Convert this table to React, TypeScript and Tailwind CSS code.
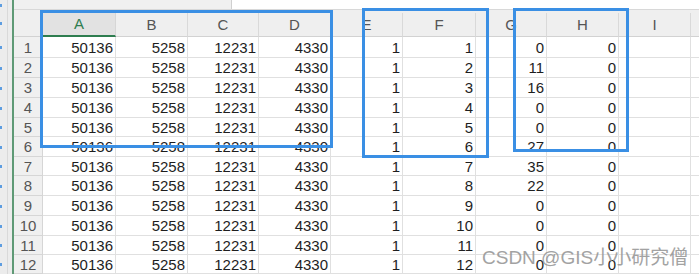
import React from "react";

const COLS = ["A", "B", "C", "D", "E", "F", "G", "H", "I"];
const WIDTHS = ["w-[73px]", "w-[72px]", "w-[71px]", "w-[72px]", "w-[72px]", "w-[73px]", "w-[71px]", "w-[72px]", "w-[72px]"];
const G = [0, 11, 16, 0, 0, 27, 35, 22, 0, 0, 0, 0];
const ROW_H = [
  "h-[21px]",
  "h-[20px]",
  "h-[20px]",
  "h-[20px]",
  "h-[19px]",
  "h-[20px]",
  "h-[19px]",
  "h-[20px]",
  "h-[20px]",
  "h-[20px]",
  "h-[19px]",
  "h-[19px]",
];

function Strip() {
  return (
    <>
      <div className="w-[12px] shrink-0 h-full bg-[#ececec] flex items-center">
        <div className="w-[2px] h-[3px] bg-[#5d9de0]" />
        <div className="ml-[5px] w-px h-full bg-[#d9d9d9]" />
      </div>
      <div className="w-[2px] shrink-0 h-full bg-[#5f9a76]" />
    </>
  );
}

export default function App() {
  return (
    <div className="relative w-[699px] h-[275px] overflow-hidden bg-white flex flex-col font-['Liberation_Sans','Noto_Sans_CJK_SC',sans-serif]">
      {/* top bar */}
      <div className="flex h-[10px] shrink-0">
        <Strip />
        <div className="flex flex-1 border-b border-[#d8d8d8]">
          <div className="w-[218px] bg-[#f0f0f0] border-r border-[#d0d0d0]" />
          <div className="flex-1 bg-white" />
        </div>
      </div>

      {/* column header */}
      <div className="flex h-[27px] shrink-0">
        <Strip />
        <div className="flex flex-1 bg-[#efefef]">
          <div className="w-[29px] shrink-0 border-r border-b border-[#d2d2d2]" />
          {COLS.map((c, i) =>
            i === 0 ? (
              <div key={c} className={`${WIDTHS[i]} shrink-0 flex flex-col`}>
                <div className="h-[7px]" />
                <div className="flex-1 bg-[#e2e2e2] border-r border-[#d6d6d6] border-b-2 border-b-[#2e7d4f] flex items-center justify-center text-[15px] text-[#2e7d4f] pt-[1px]">
                  {c}
                </div>
              </div>
            ) : (
              <div key={c} className={`${WIDTHS[i]} shrink-0 flex flex-col`}>
                <div className="h-[8px] border-b border-transparent" />
                <div className="flex-1 border-r border-[#d9d9d9] border-b border-b-[#d2d2d2] flex items-center justify-center text-[15px] text-[#555] pt-[1px]">
                  {c}
                </div>
              </div>
            )
          )}
          <div className="flex-1 flex flex-col">
            <div className="h-[8px]" />
            <div className="flex-1 border-b border-[#d2d2d2]" />
          </div>
        </div>
      </div>

      {/* data rows */}
      {ROW_H.map((h, r) => {
        const vals: (string | number)[] = [50136, 5258, 12231, 4330, 1, r + 1, G[r], 0, ""];
        return (
          <div key={r} className={`flex ${h} shrink-0`}>
            <Strip />
            <div className="flex flex-1 min-w-0">
              <div className="w-[29px] shrink-0 bg-[#f0f0f0] border-r border-b border-[#d6d6d6] flex items-center justify-center pt-[2px] text-[15px] text-[#555]">
                {r + 1}
              </div>
              {vals.map((v, i) => (
                <div
                  key={i}
                  className={`${WIDTHS[i]} shrink-0 border-r border-b border-[#e0e0e0] flex items-center justify-end pr-[2px] pt-[2px] text-[15px] text-[#1e1e1e]`}
                >
                  {v}
                </div>
              ))}
              <div className="flex-1 border-b border-[#e0e0e0]" />
            </div>
          </div>
        );
      })}

      {/* annotation boxes */}
      <div className="absolute left-[40px] top-[10px] w-[293px] h-[138px] border-[3px] border-[#3a8fe4] pointer-events-none" />
      <div className="absolute left-[362px] top-[8px] w-[127px] h-[150px] border-[3px] border-[#3a8fe4] pointer-events-none" />
      <div className="absolute left-[513px] top-[8px] w-[116px] h-[144px] border-[3px] border-[#3a8fe4] pointer-events-none" />

      {/* watermark */}
      <div className="absolute left-[482px] top-[248px] text-[19px] leading-[19px] whitespace-nowrap text-[#999999] opacity-90 pointer-events-none">
        CSDN @GIS小小研究僧
      </div>
    </div>
  );
}
